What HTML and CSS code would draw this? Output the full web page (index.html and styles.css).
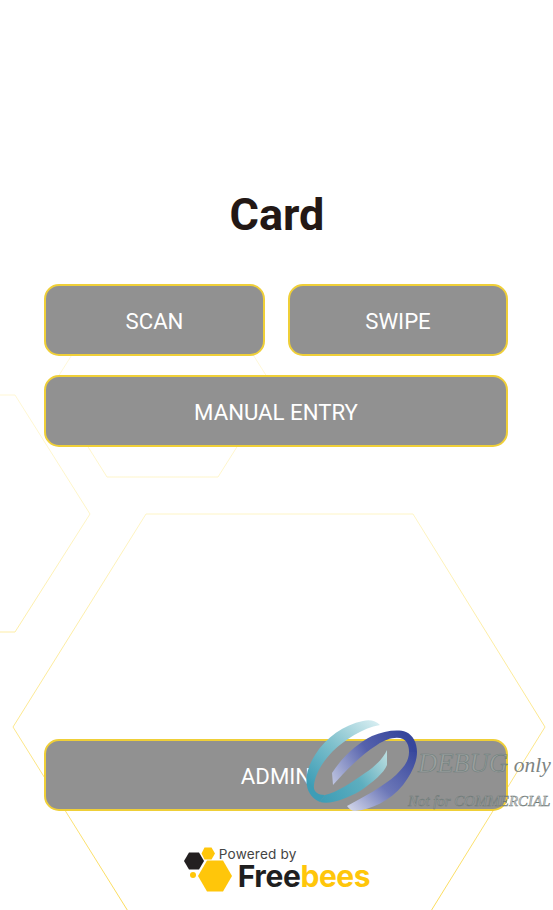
FILE: index.html
```html
<!DOCTYPE html>
<html lang="en">
<head>
<meta charset="utf-8">
<title>Card</title>
<link rel="stylesheet" href="styles.css">
</head>
<body>
<main class="screen">
  <svg class="hexes" viewBox="0 0 553 910" aria-hidden="true">
    <defs>
      <linearGradient id="line" gradientUnits="userSpaceOnUse" x1="0" y1="300" x2="0" y2="910">
        <stop offset="0" stop-color="#fff9e0"/>
        <stop offset="0.35" stop-color="#fef5c6"/>
        <stop offset="1" stop-color="#fbdc5c"/>
      </linearGradient>
    </defs>
    <g fill="none" stroke="url(#line)" stroke-width="1">
      <path d="M107 477H218L274 388L218 299H107L51 388Z"/>
      <path d="M-60 395H15L90 514L15 632H-60"/>
      <path d="M146 514H413L545 727L413 940H146L13 727Z"/>
    </g>
  </svg>

  <h1 class="title">Card</h1>

  <div class="actions">
    <button class="btn">SCAN</button>
    <button class="btn">SWIPE</button>
    <button class="btn btn-wide">MANUAL ENTRY</button>
  </div>

  <button class="btn btn-admin">ADMIN</button>

  <footer class="logo">
    <svg class="logo-mark" viewBox="0 0 50 46" aria-hidden="true">
      <polygon fill="#231f20" points="0,14 5,5.500 15,5.500 20,14 15,22.500 5,22.500"/>
      <polygon fill="#ffc60a" points="17.500,6.500 20.500,0.500 27.500,0.500 31,6.500 27.500,12.500 20.500,12.500"/>
      <polygon fill="#ffc60a" points="14,29 23,13.500 39,13.500 48,29 39,44.500 23,44.500"/>
      <circle fill="#ffc60a" cx="9" cy="28" r="3"/>
    </svg>
    <div class="logo-text">
      <span class="logo-powered">Powered by</span>
      <span class="logo-name">Free<span class="logo-accent">bees</span></span>
    </div>
  </footer>

  <div class="watermark" aria-hidden="true">
    <svg class="wm-ring" viewBox="0 0 120 100">
      <defs>
        <linearGradient id="tealA" gradientUnits="userSpaceOnUse" x1="70" y1="2" x2="10" y2="70">
          <stop offset="0" stop-color="#d4ecf0"/>
          <stop offset="0.5" stop-color="#7fc0cc"/>
          <stop offset="1" stop-color="#3d9db6"/>
        </linearGradient>
        <linearGradient id="tealB" gradientUnits="userSpaceOnUse" x1="20" y1="85" x2="85" y2="40">
          <stop offset="0" stop-color="#3d9db6"/>
          <stop offset="0.55" stop-color="#5eaebf"/>
          <stop offset="1" stop-color="#b5dadd"/>
        </linearGradient>
        <linearGradient id="blueA" gradientUnits="userSpaceOnUse" x1="48" y1="96" x2="112" y2="30">
          <stop offset="0" stop-color="#d6daec"/>
          <stop offset="0.45" stop-color="#6d78b8"/>
          <stop offset="1" stop-color="#36469c"/>
        </linearGradient>
        <linearGradient id="blueB" gradientUnits="userSpaceOnUse" x1="105" y1="20" x2="30" y2="68">
          <stop offset="0" stop-color="#36469c"/>
          <stop offset="0.45" stop-color="#5561ac"/>
          <stop offset="1" stop-color="#c2c8e2"/>
        </linearGradient>
      </defs>
      <path fill="url(#tealA)" d="M80 10C76 6 70 4 63 6C44 10 26 22 15 40C8 51 5 62 7 71C8 78 13 84 20 87L25 80C17 80 13 76 14 70C15 60 22 47 33 36C45 25 62 13 80 10Z"/>
      <path fill="url(#tealB)" d="M20 87C30 90 46 84 60 76C73 67 84 58 87 50L87 35C84 42 76 51 65 58C52 67 36 78 25 80Z"/>
      <path fill="url(#blueA)" d="M47 91C49 94 52 96 55 96C70 95 90 86 103 70C112 58 117 47 117 37L109 37C109 46 104 52 96 60C84 71 62 83 47 91Z"/>
      <path fill="url(#blueB)" d="M117 37C117 28 113 20 106 17C98 14 84 16 72 21C58 28 42 42 32 58L33 70C42 60 58 42 77 30C86 24 96 21 103 24C107 26 109 31 109 37Z"/>
    </svg>
    <div class="wm-debug"><span class="wm-outline">DEBUG</span><span class="wm-only">only</span></div>
    <div class="wm-note">Not for COMMERCIAL</div>
  </div>
</main>
</body>
</html>
```
FILE: styles.css
```css
* {
  box-sizing: border-box;
}

html,
body {
  margin: 0;
  height: 100%;
  background: #ffffff;
}

.screen {
  position: relative;
  display: flex;
  flex-direction: column;
  height: 910px;
  padding: 0 45px 0 44px;
  overflow: hidden;
  font-family: Roboto, "Liberation Sans", sans-serif;
}

.hexes {
  position: absolute;
  inset: 0;
  width: 553px;
  height: 910px;
}

.title {
  position: relative;
  margin: 186px 0 41px;
  padding-left: 2px;
  font-size: 45px;
  line-height: 57px;
  font-weight: 700;
  text-align: center;
  color: #231815;
}

.actions {
  position: relative;
  display: grid;
  grid-template-columns: 221px 220px;
  column-gap: 23px;
  row-gap: 19px;
}

.btn {
  height: 72px;
  padding: 2px 0 0;
  border: 2px solid #efcf38;
  border-radius: 15px;
  background: #919191;
  color: #ffffff;
  font-family: inherit;
  font-size: 22.2px;
  font-weight: 400;
}

.btn-wide {
  grid-column: 1 / -1;
}

.btn-admin {
  position: relative;
  margin-top: auto;
}

.logo {
  position: relative;
  display: flex;
  justify-content: center;
  align-items: flex-start;
  height: 63px;
  margin-top: 36px;
  padding-left: 2px;
}

.logo-mark {
  width: 50px;
  height: 46px;
  flex: none;
}

.logo-text {
  display: flex;
  flex-direction: column;
  margin-left: -15px;
}

.logo-powered {
  font-family: Inter, sans-serif;
  font-size: 13.6px;
  line-height: 14px;
  letter-spacing: 0.2px;
  color: #444444;
}

.logo-name {
  margin-left: 19px;
  font-family: Inter, sans-serif;
  font-size: 30px;
  line-height: 30px;
  font-weight: 700;
  letter-spacing: -0.4px;
  color: #1f1f1f;
}

.logo-accent {
  color: #ffc60a;
}

.watermark {
  position: absolute;
  top: 715px;
  left: 300px;
  width: 253px;
  height: 100px;
  font-family: "Liberation Serif", serif;
  font-style: italic;
}

.wm-ring {
  position: absolute;
  top: 0;
  left: 0;
  width: 120px;
  height: 100px;
}

.wm-debug {
  position: absolute;
  top: 32px;
  left: 118px;
  display: flex;
  align-items: baseline;
  gap: 6px;
  line-height: 32px;
  white-space: nowrap;
}

.wm-outline {
  font-size: 26.500px;
  color: rgba(170, 180, 178, 0.45);
  -webkit-text-stroke: 0.6px #6f7f7c;
}

.wm-only {
  font-size: 21.500px;
  color: #7d8482;
}

.wm-note {
  position: absolute;
  top: 76px;
  left: 108px;
  font-size: 14.900px;
  line-height: 20px;
  white-space: nowrap;
  color: rgba(170, 176, 174, 0.5);
  -webkit-text-stroke: 0.5px #6f7a78;
}
```
